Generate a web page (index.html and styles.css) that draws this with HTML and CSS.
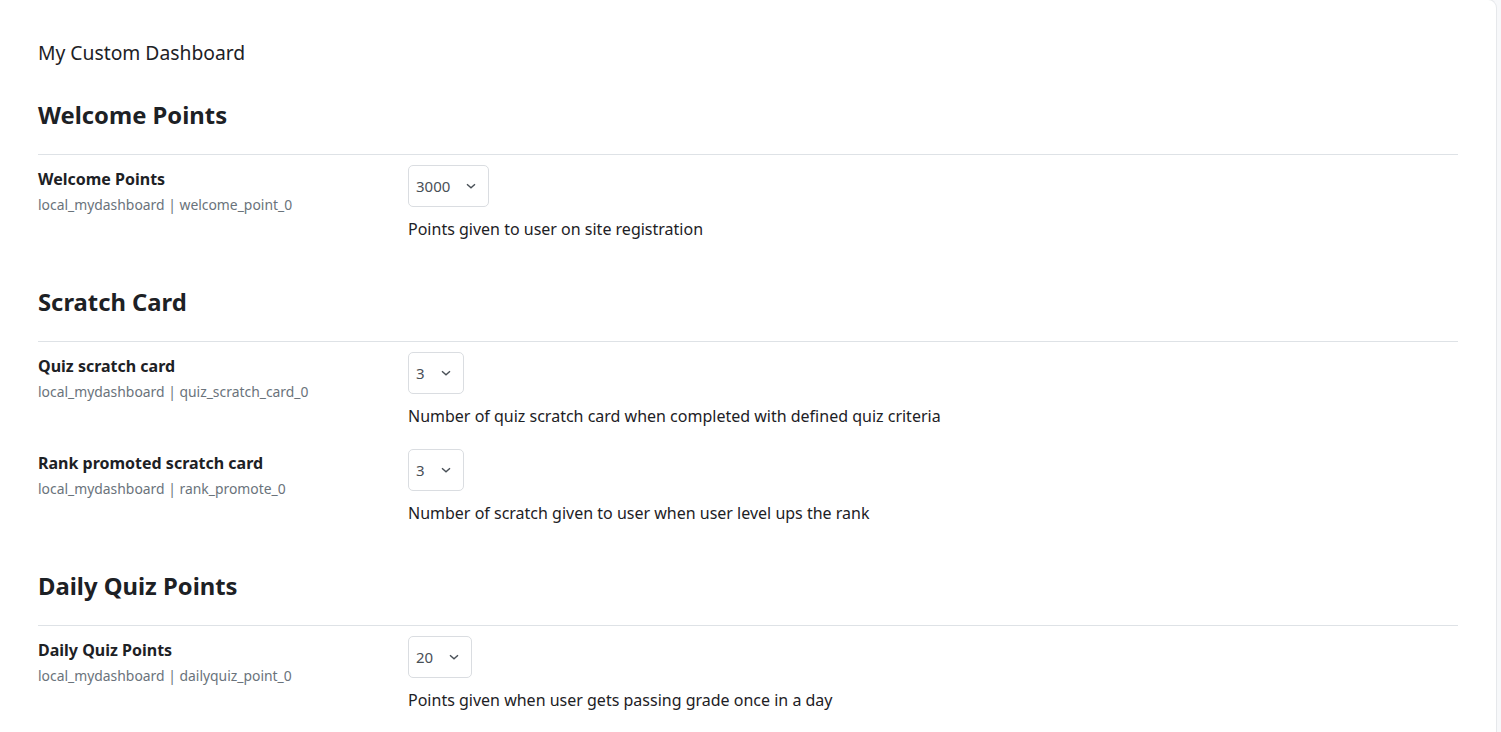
FILE: index.html
```html
<!DOCTYPE html>
<html lang="en">
<head>
<meta charset="utf-8">
<title>My Custom Dashboard</title>
<link rel="stylesheet" href="styles.css">
</head>
<body>
<div class="page">
  <main class="card">
    <h2 class="page-title">My Custom Dashboard</h2>

    <section class="section">
      <h3 class="section-title">Welcome Points</h3>
      <div class="setting">
        <div class="setting-label">
          <div class="label">Welcome Points</div>
          <div class="shortname">local_mydashboard | welcome_point_0</div>
        </div>
        <div class="setting-control">
          <div class="select select-w80"><span class="val">3000</span><svg class="chev" width="10" height="6" viewBox="0 0 10 6"><path d="M1 1.2 5 4.8 9 1.2" fill="none" stroke="#495057" stroke-width="1.4"/></svg></div>
          <div class="desc">Points given to user on site registration</div>
        </div>
      </div>
    </section>

    <section class="section">
      <h3 class="section-title">Scratch Card</h3>
      <div class="setting">
        <div class="setting-label">
          <div class="label">Quiz scratch card</div>
          <div class="shortname">local_mydashboard | quiz_scratch_card_0</div>
        </div>
        <div class="setting-control">
          <div class="select select-w55"><span class="val">3</span><svg class="chev" width="10" height="6" viewBox="0 0 10 6"><path d="M1 1.2 5 4.8 9 1.2" fill="none" stroke="#495057" stroke-width="1.4"/></svg></div>
          <div class="desc">Number of quiz scratch card when completed with defined quiz criteria</div>
        </div>
      </div>
      <div class="setting">
        <div class="setting-label">
          <div class="label">Rank promoted scratch card</div>
          <div class="shortname">local_mydashboard | rank_promote_0</div>
        </div>
        <div class="setting-control">
          <div class="select select-w55"><span class="val">3</span><svg class="chev" width="10" height="6" viewBox="0 0 10 6"><path d="M1 1.2 5 4.8 9 1.2" fill="none" stroke="#495057" stroke-width="1.4"/></svg></div>
          <div class="desc">Number of scratch given to user when user level ups the rank</div>
        </div>
      </div>
    </section>

    <section class="section">
      <h3 class="section-title">Daily Quiz Points</h3>
      <div class="setting">
        <div class="setting-label">
          <div class="label">Daily Quiz Points</div>
          <div class="shortname">local_mydashboard | dailyquiz_point_0</div>
        </div>
        <div class="setting-control">
          <div class="select select-w63"><span class="val">20</span><svg class="chev" width="10" height="6" viewBox="0 0 10 6"><path d="M1 1.2 5 4.8 9 1.2" fill="none" stroke="#495057" stroke-width="1.4"/></svg></div>
          <div class="desc">Points given when user gets passing grade once in a day</div>
        </div>
      </div>
    </section>
  </main>
</div>
</body>
</html>
```
FILE: styles.css
```css
html, body {
  margin: 0;
  padding: 0;
  height: 100%;
  overflow: hidden;
  background: #f7f8fa;
}
body {
  font-family: "Noto Sans", "Open Sans", sans-serif;
  color: #1d2125;
}
.page {
  width: 1497px;
}
.card {
  box-sizing: border-box;
  margin-top: -1px;
  min-height: calc(100vh + 1px);
  background: #fff;
  border: 1px solid #e6e8eb;
  border-left: none;
  border-bottom: none;
  border-top-right-radius: 9px;
  padding: 39px 38px 0 38px;
}
.page-title {
  margin: 0;
  font-size: 19.3px;
  line-height: 28px;
  font-weight: 400;
  color: #1d2125;
}
.section {
  margin-top: 45px;
}
.page-title + .section {
  margin-top: 32px;
}
.section-title {
  margin: 0;
  font-size: 23.8px;
  line-height: 32px;
  font-weight: 700;
  color: #1d2125;
  padding-bottom: 23px;
  border-bottom: 1px solid #dee2e6;
}
.setting {
  display: grid;
  grid-template-columns: 370px 1fr;
  margin-top: 10px;
}
.setting + .setting {
  margin-top: 21px;
}
.setting-label {
  padding-top: 2px;
}
.label {
  font-size: 16px;
  line-height: 24px;
  font-weight: 700;
  color: #1d2125;
}
.shortname {
  margin-top: 4px;
  font-size: 13.9px;
  line-height: 20px;
  color: #6a737b;
}
.setting-control {
  display: flex;
  flex-direction: column;
  align-items: flex-start;
}
.select {
  box-sizing: border-box;
  display: flex;
  align-items: center;
  height: 42px;
  padding-left: 7px;
  border: 1px solid #dadde1;
  border-radius: 5px;
  background: #fff;
  font-size: 15px;
  color: #495057;
}
.select-w80 { width: 81px; }
.select-w55 { width: 56px; }
.select-w63 { width: 64px; }
.chev {
  margin-left: auto;
  margin-right: 12px;
}
.desc {
  margin-top: 10px;
  font-size: 16px;
  line-height: 24px;
  color: #1d2125;
}
```
